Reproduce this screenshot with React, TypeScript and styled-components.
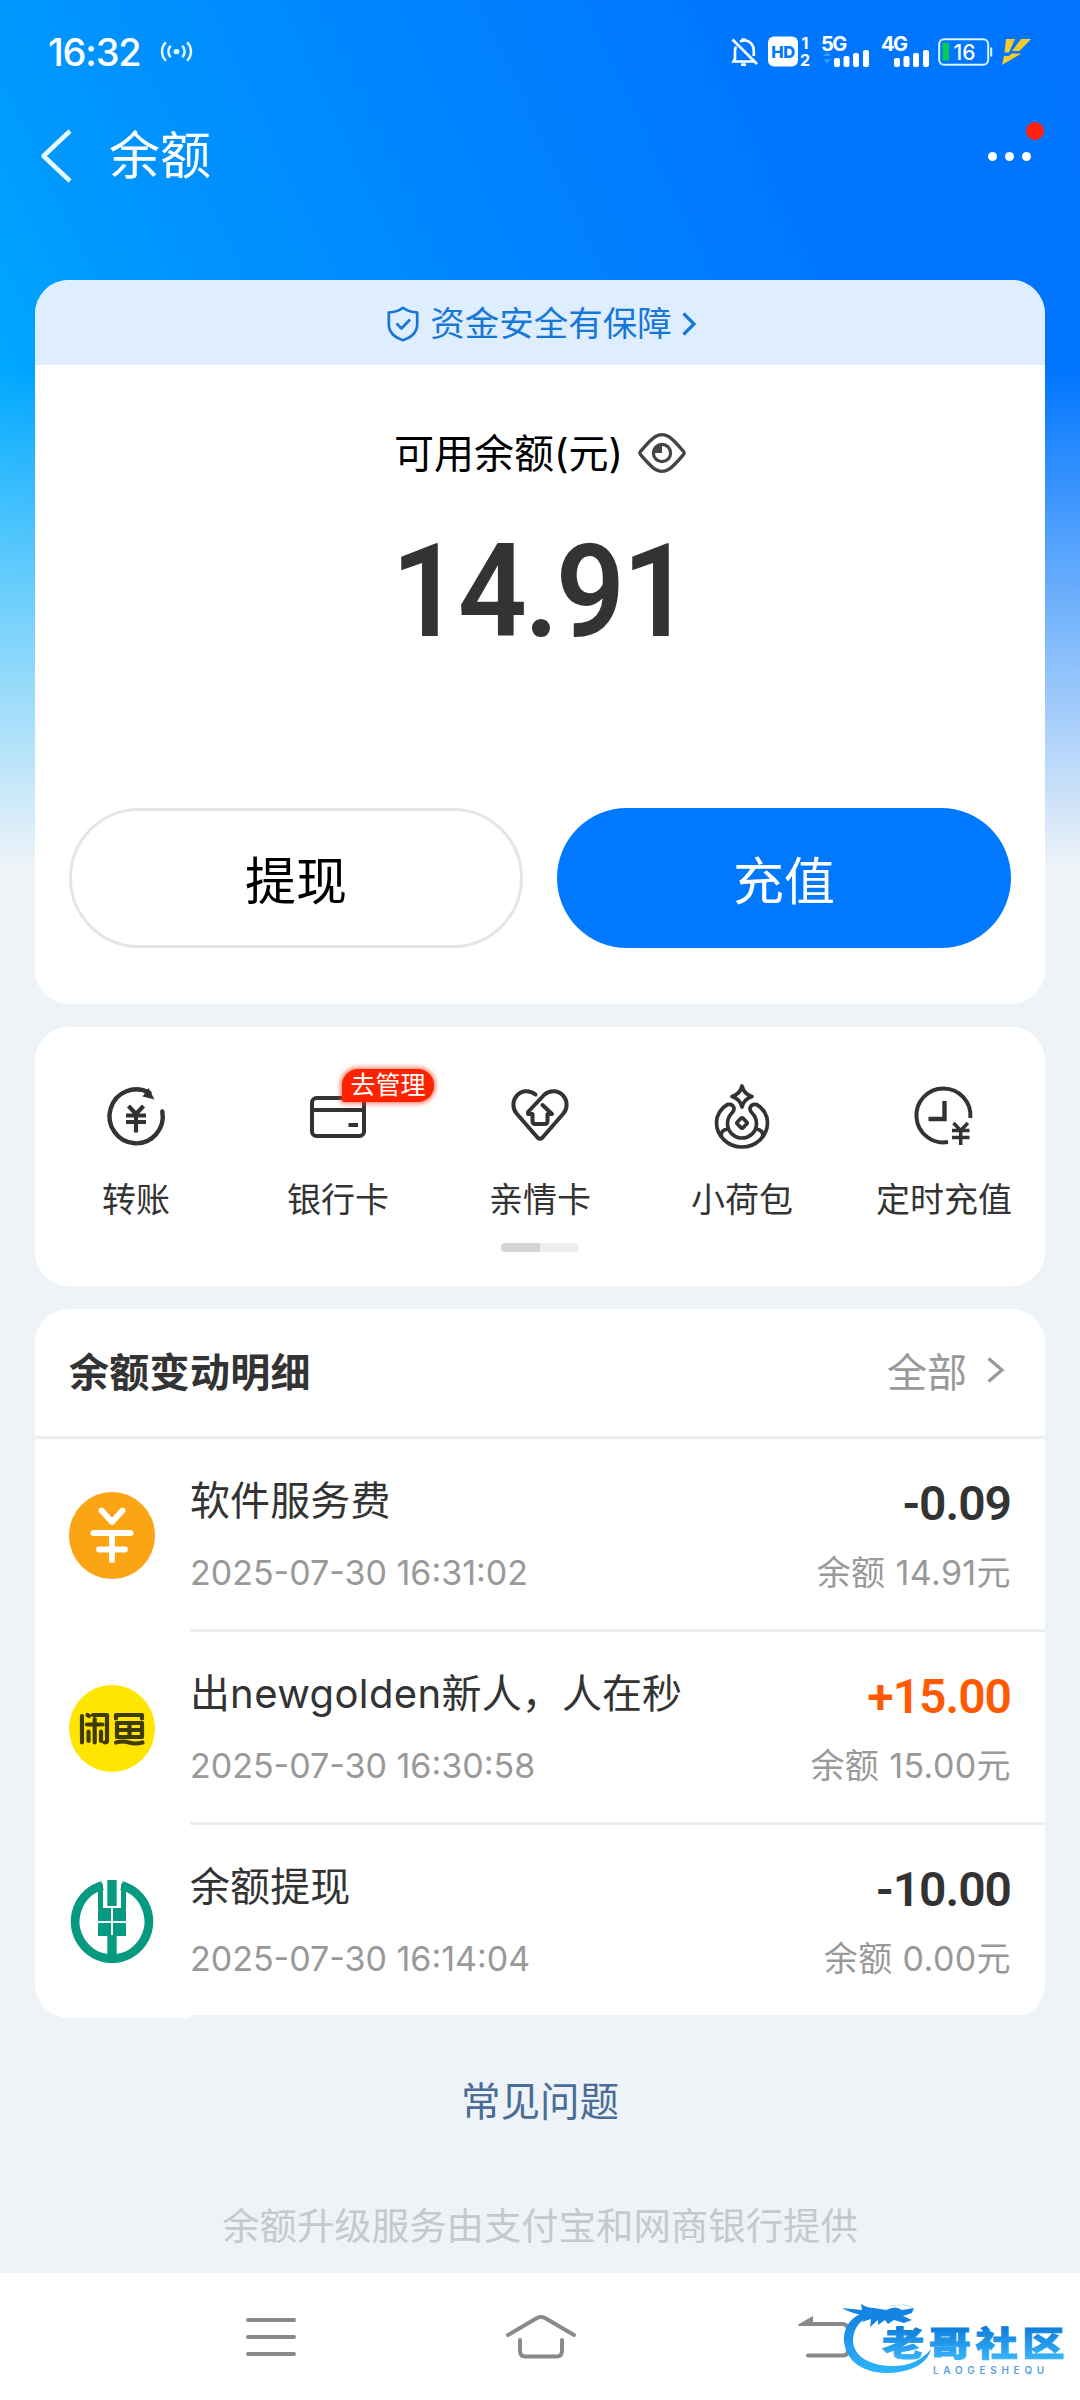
import React from "react";
import styled, { createGlobalStyle, css } from "styled-components";

const FONT = `Inter, "Noto Sans CJK SC", sans-serif`;
const NUM = `Roboto, "Noto Sans CJK SC", sans-serif`;
const INK = "#333333";
const MUTED = "#999999";
const PAGE = "#eef3f7";

const GlobalStyle = createGlobalStyle`
  * { box-sizing: border-box; }
  body { margin: 0; background: ${PAGE}; font-family: ${FONT}; }
  svg { display: block; flex: none; overflow: visible; }
`;

const Screen = styled.div`
  width: 1080px;
  height: 2400px;
  overflow: hidden;
  display: flex;
  flex-direction: column;
  background:
    linear-gradient(180deg, rgba(238, 243, 248, 0) 370px, #eef3f8 868px) no-repeat 0 0 / 1080px 868px,
    linear-gradient(65deg, #00b0ff 10%, #0097ff 27%, #0085ff 52%, #0077ff 74%, #0074ff 100%) no-repeat 0 0 / 1080px 868px,
    ${PAGE};
`;

const StatusBar = styled.header`
  height: 100px;
  padding: 3px 49px 0 48px;
  display: flex;
  align-items: center;
  color: #fff;
`;

const Clock = styled.span`
  width: 93px;
  font-size: 38px;
  font-weight: 500;
  line-height: 40px;
  letter-spacing: -1.2px;
  white-space: nowrap;
`;

const Slot = styled.span<{ $gap: number }>`
  margin-left: ${(p) => p.$gap}px;
  display: flex;
`;

const Spacer = styled.span`
  flex: 1;
`;

const TitleBar = styled.nav`
  height: 112px;
  padding: 0 49px 0 39px;
  display: flex;
  align-items: center;
  color: #fff;
`;

const PageTitle = styled.h1`
  margin: 0 auto 0 37px;
  font-size: 51px;
  font-weight: 400;
  line-height: 60px;
`;

const More = styled.div`
  position: relative;
  display: flex;
  gap: 8px;
`;

const Dot = styled.i`
  width: 9px;
  height: 9px;
  border-radius: 50%;
  background: #fff;
`;

const RedDot = styled.i`
  position: absolute;
  left: 38px;
  top: -30px;
  width: 18px;
  height: 18px;
  border-radius: 50%;
  background: #ff2010;
`;

const Cards = styled.main`
  padding: 68px 35px 0;
  display: flex;
  flex-direction: column;
`;

const Card = styled.section<{ $h: number; $mt?: number }>`
  height: ${(p) => p.$h}px;
  margin-top: ${(p) => p.$mt ?? 0}px;
  border-radius: 34px;
  background: #fff;
  overflow: hidden;
  display: flex;
  flex-direction: column;
`;

const SafetyBand = styled.div`
  height: 85px;
  background: #dfeeff;
  color: #1677d9;
  display: flex;
  align-items: center;
  justify-content: center;
  font-size: 34.5px;
  line-height: 50px;
  padding: 2px 0 0 3px;
`;

const SafetyText = styled.span`
  margin: 0 10px 0 11px;
`;

const BalanceLabel = styled.div`
  margin-top: 59px;
  height: 58px;
  display: flex;
  align-items: center;
  justify-content: center;
  gap: 15px;
  font-size: 40px;
  color: #000;
`;

const BalanceLabelText = styled.span`
  padding-bottom: 5px;
`;

const BalanceAmount = styled.div`
  margin-top: 35px;
  height: 150px;
  line-height: 150px;
  text-align: center;
  font-family: ${NUM};
  font-size: 129px;
  font-weight: 600;
  letter-spacing: -3px;
  transform: scaleX(0.94);
  color: ${INK};
`;

const Actions = styled.div`
  margin-top: auto;
  padding: 0 34px 56px;
  display: grid;
  grid-template-columns: 1fr 1fr;
  gap: 34px;
`;

const ActionButton = styled.button<{ $primary?: boolean }>`
  height: 140px;
  padding: 0;
  border-radius: 70px;
  font: 400 51px ${FONT};
  ${(p) =>
    p.$primary
      ? css`
          border: 0;
          background: #0079ff;
          color: #fff;
        `
      : css`
          border: 3px solid #e5e5e5;
          background: #fff;
          color: #000;
        `}
`;

const Shortcuts = styled.div`
  height: 216px;
  padding-top: 52px;
  display: grid;
  grid-template-columns: repeat(5, 202px);
`;

const Shortcut = styled.a`
  position: relative;
  display: flex;
  flex-direction: column;
  align-items: center;
  font-size: 34px;
  line-height: 50px;
  color: ${INK};
  white-space: nowrap;
`;

const ShortcutLabel = styled.span`
  margin-top: 24px;
`;

const Badge = styled.span`
  position: absolute;
  left: 105px;
  top: -10px;
  width: 92px;
  height: 33px;
  border-radius: 16px 16px 16px 2px;
  background: #ff2200;
  box-shadow: 0 0 4px 2px rgba(255, 60, 30, 0.6);
  color: #fff;
  font-size: 25px;
  line-height: 32px;
  text-align: center;
`;

const Pager = styled.div`
  width: 78px;
  height: 9px;
  margin: 0 auto;
  border-radius: 4px;
  background: #eeeeee;
  overflow: hidden;
`;

const PagerThumb = styled.div`
  width: 39px;
  height: 9px;
  background: #d5d5d5;
`;

const ListHeader = styled.div`
  height: 130px;
  padding: 0 41px 6px 34px;
  border-bottom: 3px solid #eeeeee;
  display: flex;
  align-items: center;
  justify-content: space-between;
  font-size: 40px;
  color: ${INK};
`;

const ListTitle = styled.h2`
  margin: 0;
  font-size: 40px;
  font-weight: 700;
  letter-spacing: 0.3px;
`;

const AllLink = styled.a`
  display: flex;
  align-items: center;
  gap: 20px;
  color: ${MUTED};
`;

const Row = styled.article`
  height: 193px;
  padding-left: 34px;
  display: flex;
`;

const RowIcon = styled.div`
  width: 121px;
  padding-top: 53px;
`;

const RowBody = styled.div<{ $last: boolean }>`
  flex: 1;
  padding: 34px 34px 0 0;
  border-bottom: 3px solid ${(p) => (p.$last ? PAGE : "#eeeeee")};
  display: flex;
  justify-content: space-between;
`;

const Column = styled.div<{ $end?: boolean }>`
  display: flex;
  flex-direction: column;
  align-items: ${(p) => (p.$end ? "flex-end" : "flex-start")};
  white-space: nowrap;
`;

const RowTitle = styled.div`
  height: 56px;
  line-height: 56px;
  font-size: 40px;
  letter-spacing: 0.1px;
  color: ${INK};
`;

const Latin = styled.span`
  letter-spacing: 0.4px;
`;

const RowDate = styled.div`
  margin-top: 19px;
  height: 50px;
  line-height: 50px;
  font-size: 34px;
  color: ${MUTED};
`;

const Amount = styled.div<{ $income: boolean }>`
  height: 60px;
  line-height: 62px;
  font-family: ${NUM};
  font-size: 48px;
  font-weight: 600;
  letter-spacing: -1px;
  color: ${(p) => (p.$income ? "#ff5a00" : INK)};
`;

const RowBalance = styled.div`
  margin-top: 15px;
  height: 50px;
  line-height: 50px;
  font-size: 34px;
  letter-spacing: 0.4px;
  color: ${MUTED};
`;

const Faq = styled.a`
  margin-top: 54px;
  height: 60px;
  line-height: 60px;
  text-align: center;
  font-size: 39.5px;
  color: #4a6c96;
`;

const Provider = styled.p`
  margin: 65px 0 0;
  height: 60px;
  line-height: 60px;
  text-align: center;
  font-size: 37.4px;
  color: #c6c9cb;
`;

const SystemNav = styled.footer`
  position: relative;
  margin-top: auto;
  height: 127px;
  background: #fff;
  padding-left: 246px;
  display: flex;
  align-items: center;
`;

const Watermark = styled.div`
  position: absolute;
  left: 840px;
  top: 22px;
`;

const HotspotIcon = () => (
  <svg width="31" height="21" viewBox="0 0 32 24" preserveAspectRatio="none" fill="none" stroke="#e8fbff" strokeWidth="2.600">
    <circle cx="16" cy="12" r="3" fill="#e8fbff" stroke="none" />
    <path d="M10 5.500a10 10 0 0 0 0 13M5 1.500a16 16 0 0 0 0 21M22 5.500a10 10 0 0 1 0 13M27 1.500a16 16 0 0 1 0 21" />
  </svg>
);

const MutedBellIcon = () => (
  <svg width="28" height="30" viewBox="0 0 28 30" fill="none" stroke="#fff" strokeWidth="2.600">
    <path d="M1.500 2.500L26 27" />
    <path d="M5 9.500C4.300 11 4 12.500 4 14.500V22L2.500 24.500H23" />
    <path d="M9 4.600C15 1.500 22.800 5 22.800 14V19" />
    <path d="M10.500 2.600h4M10 27.600h5" />
  </svg>
);

const HdIcon = () => (
  <svg width="44" height="31" viewBox="0 0 44 31" fontFamily="Inter, sans-serif">
    <rect x="0" y="0.500" width="30" height="30" rx="6" fill="#fff" />
    <text x="15" y="22" textAnchor="middle" fontSize="16.500" fontWeight="800" letterSpacing="-0.500" fill="#0077ff">HD</text>
    <text x="37" y="12.500" textAnchor="middle" fontSize="16" fontWeight="700" fill="#fff">1</text>
    <text x="37" y="30" textAnchor="middle" fontSize="16" fontWeight="700" fill="#fff">2</text>
  </svg>
);

const SignalIcon = ({ label, data }: { label: string; data?: boolean }) => (
  <svg width="49" height="31" viewBox="0 0 49 31" fill="#fff">
    <text x="0" y="15" fontSize="20" fontWeight="700" letterSpacing="-1.500" fontFamily="Inter, sans-serif">{label}</text>
    {data && <path d="M2 20l4-4 4 4zM2 23h8l-4 5z" fill="#2b9bff" />}
    <rect x="13" y="22" width="6" height="9" rx="2" />
    <rect x="22.500" y="20" width="6" height="11" rx="2" />
    <rect x="32" y="17" width="6" height="14" rx="2" />
    <rect x="42" y="14" width="6" height="17" rx="2" />
  </svg>
);

const BatteryIcon = () => (
  <svg width="55" height="28" viewBox="0 0 55 28">
    <rect x="1.200" y="1.200" width="49" height="25.600" rx="5" fill="none" stroke="#d9f6ff" strokeWidth="2" />
    <rect x="4.500" y="5" width="6.500" height="17.500" fill="#04cc55" />
    <path d="M53.200 9.500v9" stroke="#d9f6ff" strokeWidth="2" />
    <text x="26.500" y="21.500" textAnchor="middle" fontSize="21" fontWeight="500" fill="#fff" fontFamily="Inter, sans-serif">16</text>
  </svg>
);

const BoltIcon = () => (
  <svg width="30" height="26" viewBox="0 0 30 26" fill="#f2cb2e">
    <path d="M5 0h9L8 13.500H3.500zM20 0h10L18.500 12H11zM10.500 14.500H20.500L1 26L3 17H8z" />
  </svg>
);

const BackChevron = () => (
  <svg width="33" height="54" viewBox="0 0 33 54" fill="none" stroke="#e8fbff" strokeWidth="4.500">
    <path d="M31 2L4.500 27L31 52" strokeLinejoin="round" />
  </svg>
);

const ShieldIcon = () => (
  <svg width="32" height="36" viewBox="0 0 32 36" fill="none" stroke="#1677d9" strokeWidth="2.700" strokeLinejoin="round">
    <path d="M16 1.800C12 5 7 6.300 1.800 6.500V18c0 8 6 13.500 14.200 16.200C24.200 31.500 30.200 26 30.200 18V6.500C25 6.300 20 5 16 1.800z" />
    <path d="M9.500 17.500l5 5 8.500-9" />
  </svg>
);

const Chevron = ({ w, h, color }: { w: number; h: number; color: string }) => (
  <svg width={w} height={h} viewBox={`0 0 ${w} ${h}`} fill="none" stroke={color} strokeWidth="3.200">
    <path d={`M1.500 1.500L${w - 2} ${h / 2}L1.500 ${h - 1.5}`} />
  </svg>
);

const EyeIcon = () => (
  <svg width="48" height="40" viewBox="0 0 48 40" fill="none" stroke="#444" strokeWidth="3.400">
    <path d="M2.500 18.500C8 12 13 6 17.500 3.500c4-2.300 9-2.300 13 0C35 6 40 12 45.500 18.500q1.200 1.500 0 3C40 28 35 34 30.500 36.500c-4 2.300-9 2.300-13 0C13 34 8 28 2.500 21.500q-1.200-1.500 0-3z" />
    <circle cx="24" cy="20" r="8.600" strokeWidth="3.200" />
    <path d="M24 12v8h-8a8 8 0 0 1 8-8z" fill="#444" stroke="none" />
  </svg>
);

const icon = {
  width: 72,
  height: 72,
  viewBox: "0 0 72 72",
  fill: "none",
  stroke: INK,
  strokeWidth: 4,
};

/* Each shortcut icon is drawn on the same 72px grid. */
const TransferIcon = () => (
  <svg {...icon}>
    <path d="M49.500 14A26.600 27 0 1 0 62.300 32.500" strokeWidth="4.400" strokeLinecap="round" />
    <path d="M48.500 9l6 11.500-12-3z" fill={INK} stroke="none" />
    <path d="M28.500 27l7.500 8 7.500-8M26 36.500h20M26 43h20M36 35v18.500" strokeWidth="4.200" />
  </svg>
);

const BankCardIcon = () => (
  <svg {...icon}>
    <rect x="10" y="19" width="52" height="38" rx="4.500" />
    <path d="M10 31h52M46.500 46h9.500" />
  </svg>
);

const FamilyCardIcon = () => (
  <svg {...icon} strokeLinecap="round" strokeLinejoin="round">
    <path d="M31.500 15.500C25 10.500 17 11.500 12.500 17c-4.500 5.500-4 13 .5 18L33.500 58.500q2.500 2.500 5 0L59 35c4.500-5 5-12.500.5-18S46.500 10.500 40.500 15.500L24 33" />
    <path d="M24 35h4.500v7q0 3 3 3h9q3 0 3-3v-7H48L38.500 26" />
  </svg>
);

const PouchIcon = () => (
  <svg {...icon} strokeWidth={3.700} strokeLinejoin="round">
    <path d="M36 7q1.800 8 10 10.500Q37.800 20 36 28q-1.800-8-10-10.500Q34.200 15 36 7z" />
    <path d="M50.500 25.500c6.500 3.500 11 10.500 11 18a25.500 24.500 0 0 1-51 0c0-7.500 4.500-14.500 11-18q5-1 6.500 3.500c.5 2.500-1 4-2.500 5.500a14.500 14.500 0 1 0 21 0c-1.500-1.500-3-3-2.500-5.500q1.500-4.500 6.500-3.500z" />
    <path d="M15.500 58q-1.500-7 6.500-8M56.500 58q1.500-7-6.500-8" />
    <rect x="32" y="40" width="8" height="8" rx="1.500" transform="rotate(45 36 44)" />
  </svg>
);

const TimerIcon = () => (
  <svg {...icon}>
    <path d="M62.300 39A27 27 0 1 0 40 63" />
    <path d="M36.500 22v18H20.500" strokeWidth="4.400" />
    <path d="M45.500 44l7.200 7.500 7.200-7.500M44 51.500h17.500M44 58.500h17.500M52.700 50v16" strokeWidth="3.500" />
  </svg>
);

const FeeIcon = () => (
  <svg width="86" height="87" viewBox="0 0 86 87">
    <ellipse cx="43" cy="43.500" rx="43" ry="43.500" fill="#fba414" />
    <path d="M32.500 18.500L43 30l10.500-11.500M24.500 41h37M30 57.500h26M43 41v27" fill="none" stroke="#fff" strokeWidth="5.800" strokeLinecap="round" strokeLinejoin="round" />
  </svg>
);

const XianyuIcon = () => (
  <svg width="86" height="87" viewBox="0 0 86 87">
    <ellipse cx="43" cy="43.500" rx="43" ry="43.500" fill="#ffe600" />
    <g fill="none" stroke="#403a04" strokeWidth="4.200" strokeLinecap="round" strokeLinejoin="round">
      <path d="M13 31v26.500M18.500 30l1.500 1M24 30h14v26q0 1.500-2.500 1.500M18 39.500h15.500M25.700 34v23.500M19.500 46.500v9.500M32 46.500v9.500" />
      <path d="M47 33.500v-3.500h26v3.500M48 38h25v14H48zM48 45h25M60.500 38v14M47 57.500q7-2 13 0t13.500 0" />
    </g>
  </svg>
);

const AgriBankIcon = () => (
  <svg width="86" height="87" viewBox="0 0 86 87">
    <path d="M33.500 7.500A36.800 37.200 0 1 0 52.500 7.500" fill="none" stroke="#069a80" strokeWidth="9" />
    <g fill="#069a80">
      <rect x="38.300" y="2" width="9.400" height="26" />
      <path d="M29 6h5v24h8v13H29zM57 6h-5v24h-8v13h13z" />
      <path d="M29 45h13v13H29zM44 45h13v13H44z" />
      <rect x="38.300" y="57" width="9.400" height="22" />
    </g>
  </svg>
);

const MenuIcon = () => (
  <svg width="50" height="40" viewBox="0 0 50 40" stroke="#8a8a8a" strokeWidth="4" strokeLinecap="round">
    <path d="M2 3h46M2 20h46M2 37h46" />
  </svg>
);

const HomeIcon = () => (
  <svg width="70" height="44" viewBox="0 0 70 44" fill="none" stroke="#8a8a8a" strokeWidth="4" strokeLinecap="round" strokeLinejoin="round">
    <path d="M2 20L31 3q4-2 8 0L68 20M14 25v11q0 5.500 5.500 5.500h31q5.500 0 5.500-5.500V25" />
  </svg>
);

const ReturnIcon = () => (
  <svg width="76" height="44" viewBox="0 0 76 44" fill="none" stroke="#8a8a8a" strokeWidth="4" strokeLinecap="round">
    <path d="M8 9h36q6 0 6 6v20q0 5.500-5.500 5.500H10" />
    <path d="M0 9.500L15 1v10H1z" fill="#8a8a8a" stroke="none" />
  </svg>
);

const DragonLogo = () => (
  <svg width="226" height="82" viewBox="0 0 226 82">
    <defs>
      <linearGradient id="ring" x1="0" y1="0" x2="0" y2="1">
        <stop offset="0" stopColor="#0f80e0" />
        <stop offset="1" stopColor="#2fb4fb" />
      </linearGradient>
      <linearGradient id="word" x1="0" y1="0" x2="0" y2="1">
        <stop offset="0.250" stopColor="#0f7fdc" />
        <stop offset="0.850" stopColor="#36b2f8" />
      </linearGradient>
    </defs>
    <path d="M28 16C12 20 3 32 4 46C6 68 26 79 50 78C72 77 88 68 91 54C82 66 66 72 50 71C30 70 14 62 13 46C13 33 20 25 32 20z" fill="url(#ring)" />
    <path d="M2 13Q12 14 22 15L21 9Q27 13 34 13L46 15Q56 10 62 15L74 13L72 18L63 21L72 25L64 28L54 25L48 29L45 25L38 30L38 25L30 32L31 24L22 27L26 20Q14 20 2 13z" fill="#1384e2" />
    <path d="M50 11Q66 8 73 13" fill="none" stroke="#c7e4fa" strokeWidth="1" />
    <text transform="translate(42 60.500) scale(1.240 1)" fontFamily="'Noto Sans CJK SC', sans-serif" fontSize="34" fontWeight="900" letterSpacing="3.700" fill="url(#word)" stroke="url(#word)" strokeWidth="0.900">老哥社区</text>
    <text x="93" y="78.500" fontFamily="Inter, sans-serif" fontSize="10" fontWeight="600" letterSpacing="4.700" fill="#5aa2de">LAOGESHEQU</text>
  </svg>
);

const shortcuts = [
  { label: "转账", Icon: TransferIcon },
  { label: "银行卡", Icon: BankCardIcon, badge: "去管理" },
  { label: "亲情卡", Icon: FamilyCardIcon },
  { label: "小荷包", Icon: PouchIcon },
  { label: "定时充值", Icon: TimerIcon },
];

const records = [
  { Icon: FeeIcon, title: "软件服务费", date: "2025-07-30 16:31:02", amount: "-0.09", balance: "余额 14.91元" },
  {
    Icon: XianyuIcon,
    title: (
      <>
        出<Latin>newgolden</Latin>新人，人在秒
      </>
    ),
    date: "2025-07-30 16:30:58",
    amount: "+15.00",
    balance: "余额 15.00元",
  },
  { Icon: AgriBankIcon, title: "余额提现", date: "2025-07-30 16:14:04", amount: "-10.00", balance: "余额 0.00元" },
];

export default function App() {
  return (
    <Screen>
      <GlobalStyle />
      <StatusBar>
        <Clock>16:32</Clock>
        <Slot $gap={20}><HotspotIcon /></Slot>
        <Spacer />
        <Slot $gap={0}><MutedBellIcon /></Slot>
        <Slot $gap={9}><HdIcon /></Slot>
        <Slot $gap={9}><SignalIcon label="5G" data /></Slot>
        <Slot $gap={11}><SignalIcon label="4G" /></Slot>
        <Slot $gap={8}><BatteryIcon /></Slot>
        <Slot $gap={8}><BoltIcon /></Slot>
      </StatusBar>
      <TitleBar>
        <BackChevron />
        <PageTitle>余额</PageTitle>
        <More>
          <Dot />
          <Dot />
          <Dot />
          <RedDot />
        </More>
      </TitleBar>
      <Cards>
        <Card $h={724}>
          <SafetyBand>
            <ShieldIcon />
            <SafetyText>资金安全有保障</SafetyText>
            <Chevron w={14} h={24} color="#1677d9" />
          </SafetyBand>
          <BalanceLabel>
            <BalanceLabelText>可用余额(元)</BalanceLabelText>
            <EyeIcon />
          </BalanceLabel>
          <BalanceAmount>14.91</BalanceAmount>
          <Actions>
            <ActionButton>提现</ActionButton>
            <ActionButton $primary>充值</ActionButton>
          </Actions>
        </Card>
        <Card $h={259} $mt={23}>
          <Shortcuts>
            {shortcuts.map(({ label, Icon, badge }) => (
              <Shortcut key={label}>
                <Icon />
                {badge && <Badge>{badge}</Badge>}
                <ShortcutLabel>{label}</ShortcutLabel>
              </Shortcut>
            ))}
          </Shortcuts>
          <Pager>
            <PagerThumb />
          </Pager>
        </Card>
        <Card $h={709} $mt={23}>
          <ListHeader>
            <ListTitle>余额变动明细</ListTitle>
            <AllLink>
              全部
              <Chevron w={17} h={26} color={MUTED} />
            </AllLink>
          </ListHeader>
          {records.map(({ Icon, title, date, amount, balance }, i) => (
            <Row key={date}>
              <RowIcon>
                <Icon />
              </RowIcon>
              <RowBody $last={i === records.length - 1}>
                <Column>
                  <RowTitle>{title}</RowTitle>
                  <RowDate>{date}</RowDate>
                </Column>
                <Column $end>
                  <Amount $income={amount.startsWith("+")}>{amount}</Amount>
                  <RowBalance>{balance}</RowBalance>
                </Column>
              </RowBody>
            </Row>
          ))}
        </Card>
      </Cards>
      <Faq>常见问题</Faq>
      <Provider>余额升级服务由支付宝和网商银行提供</Provider>
      <SystemNav>
        <MenuIcon />
        <Slot $gap={210}><HomeIcon /></Slot>
        <Slot $gap={222}><ReturnIcon /></Slot>
        <Watermark>
          <DragonLogo />
        </Watermark>
      </SystemNav>
    </Screen>
  );
}
